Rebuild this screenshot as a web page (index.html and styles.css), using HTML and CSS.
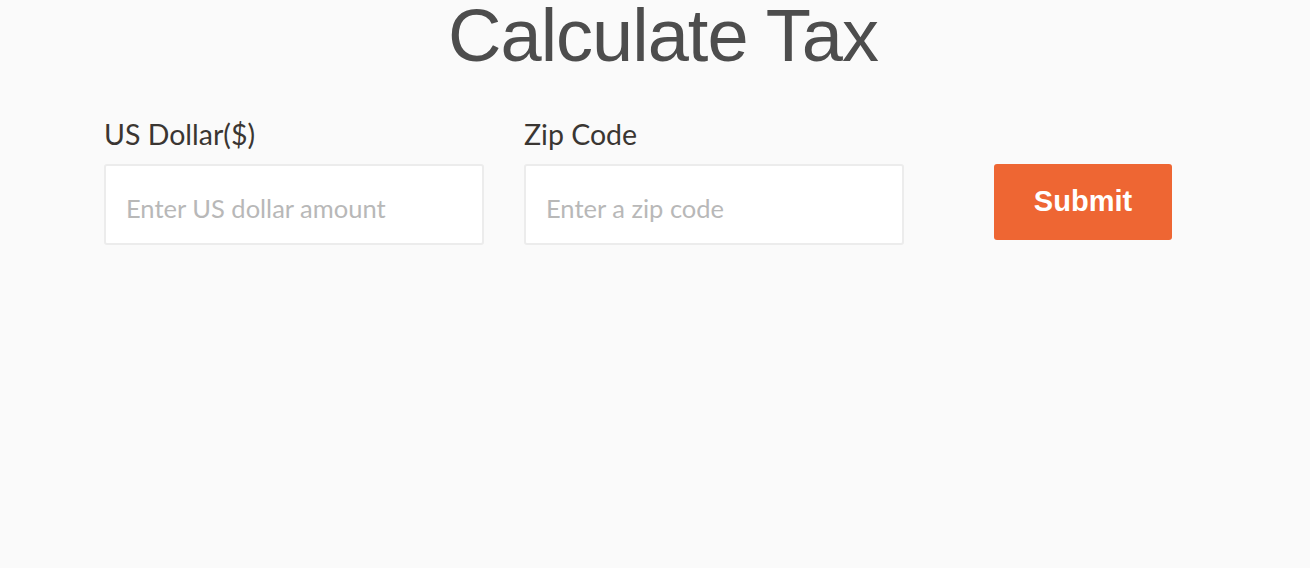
FILE: index.html
```html
<!DOCTYPE html>
<html>
<head>
<meta charset="utf-8">
<link rel="stylesheet" href="styles.css">
</head>
<body>
<main class="page">
  <h1 class="title">Calculate Tax</h1>
  <form class="form">
    <div class="field">
      <label class="label" for="usd">US Dollar($)</label>
      <input class="input" id="usd" type="text" placeholder="Enter US dollar amount">
    </div>
    <div class="field">
      <label class="label" for="zip">Zip Code</label>
      <input class="input" id="zip" type="text" placeholder="Enter a zip code">
    </div>
    <div class="actions">
      <button class="submit" type="button">Submit</button>
    </div>
  </form>
</main>
</body>
</html>
```
FILE: styles.css
```css
html, body {
  margin: 0;
  padding: 0;
  background: #fafafa;
}
.page {
  width: 1310px;
  height: 568px;
}
.title {
  margin: 0;
  text-align: center;
  padding-left: 16px;
  font-family: "Liberation Sans", Arial, sans-serif;
  font-weight: normal;
  font-size: 74px;
  line-height: 72px;
  letter-spacing: -1px;
  color: #4d4d4d;
}
.form {
  display: flex;
  align-items: flex-start;
  gap: 40px;
  padding-left: 104px;
  margin-top: 44px;
}
.field {
  display: flex;
  flex-direction: column;
  width: 380px;
}
.label {
  font-family: Lato, "Liberation Sans", sans-serif;
  font-size: 28.5px;
  line-height: 36px;
  color: #3a3632;
  margin-bottom: 12px;
}
.input {
  box-sizing: border-box;
  width: 380px;
  height: 81px;
  border: 2px solid #ececec;
  border-radius: 3px;
  background: #fff;
  padding: 6px 20px 0;
  font-family: Lato, "Liberation Sans", sans-serif;
  font-size: 25.5px;
  color: #333;
  outline: none;
}
.input::placeholder {
  color: #b8b8b8;
}
.actions {
  padding-top: 48px;
  padding-left: 50px;
}
.submit {
  width: 178px;
  height: 76px;
  border: none;
  border-radius: 3px;
  background: #ee6633;
  color: #fff;
  font-family: "Liberation Sans", Arial, sans-serif;
  font-weight: bold;
  font-size: 29px;
  padding: 0 0 2px;
}
```
